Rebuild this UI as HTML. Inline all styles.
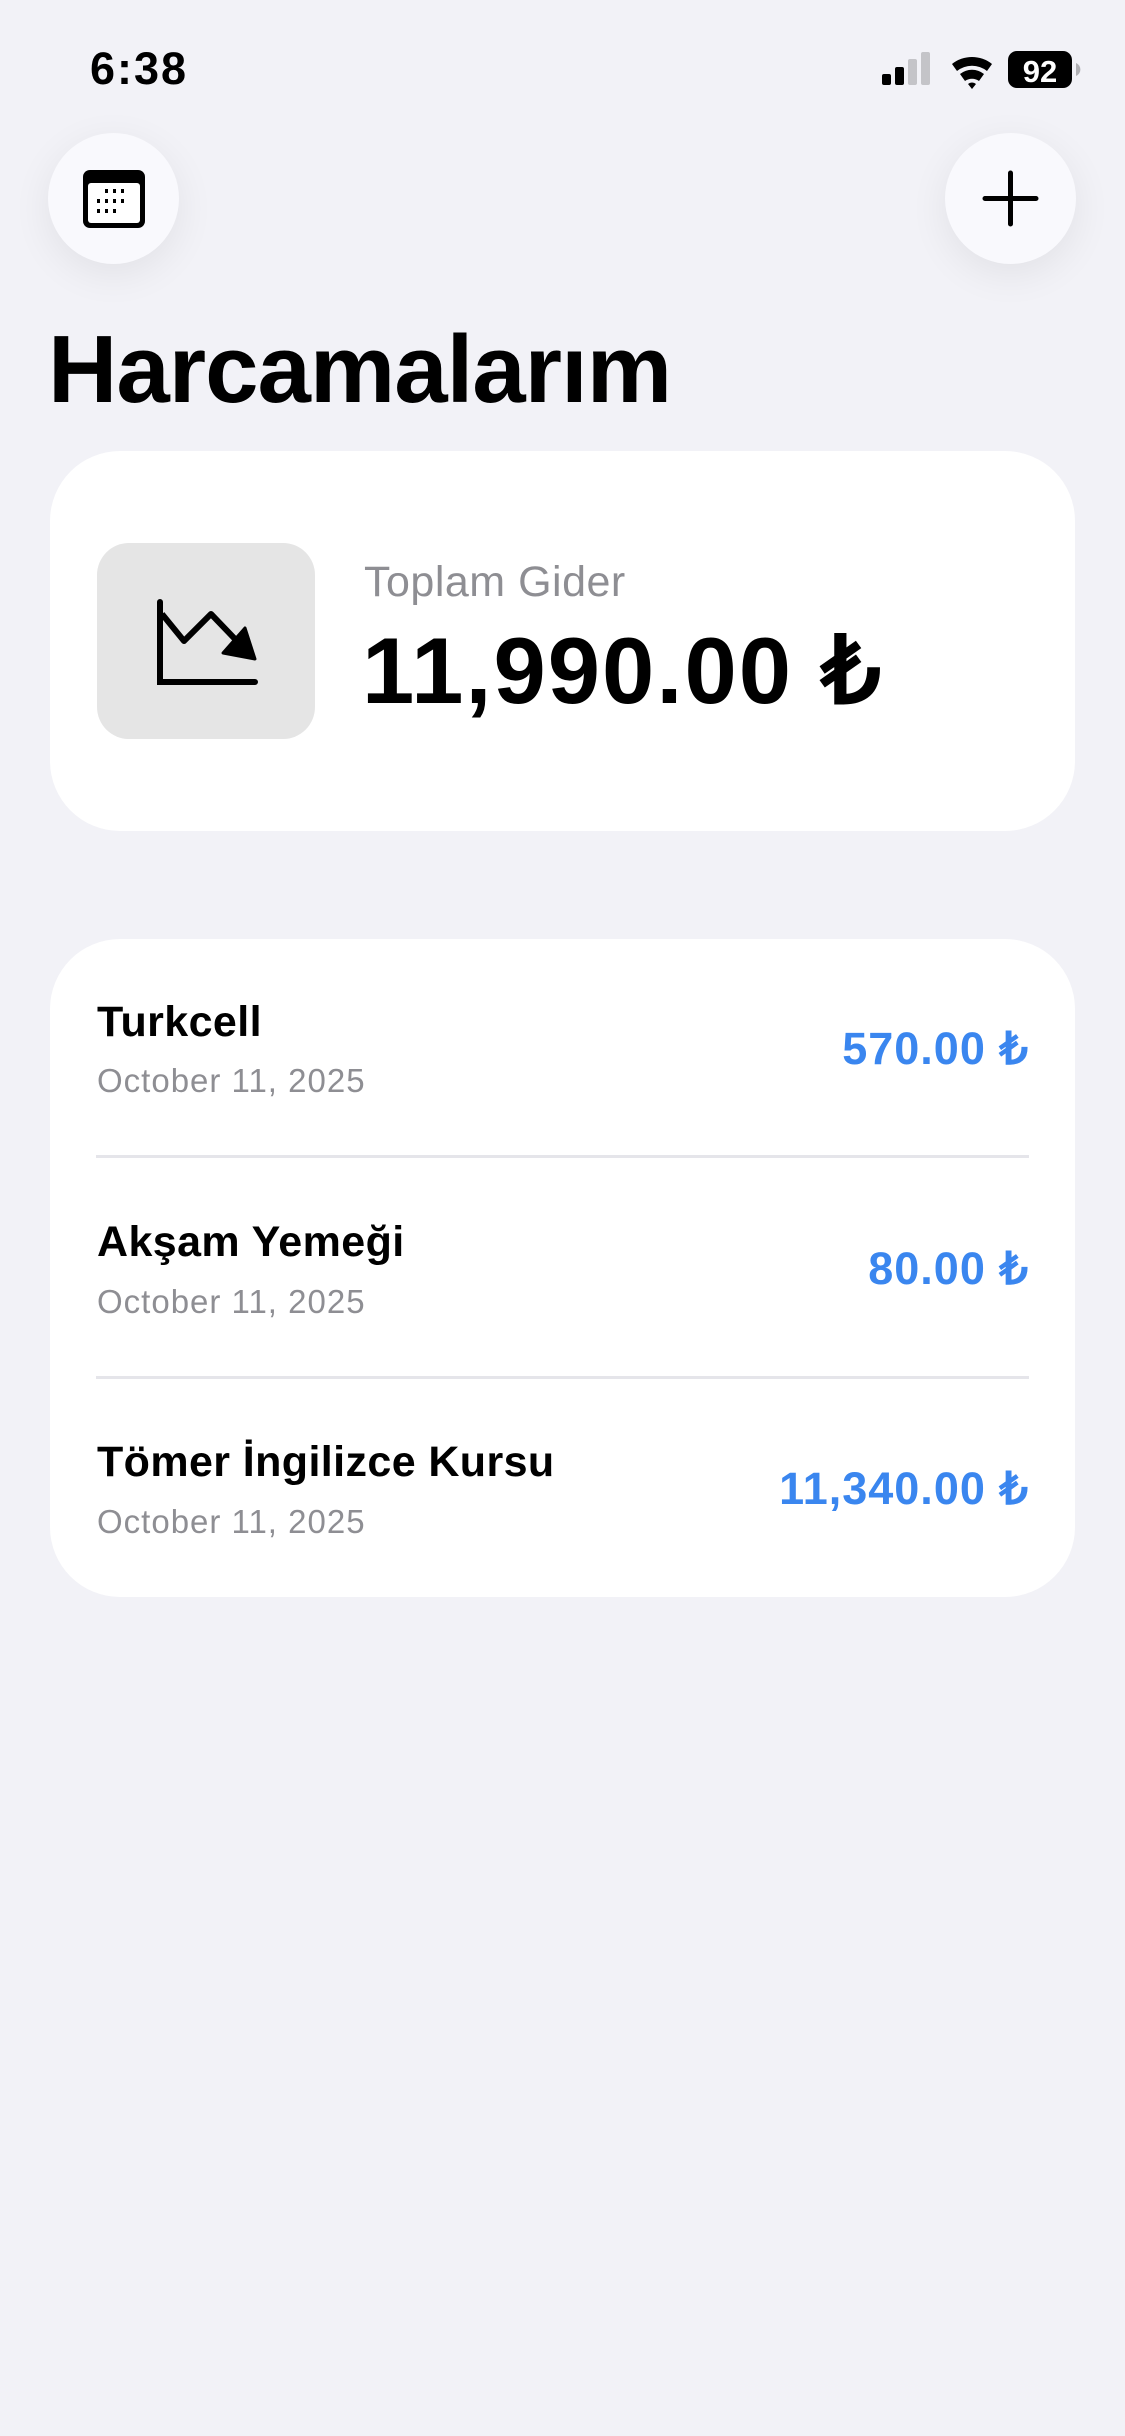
<!DOCTYPE html>
<html><head><meta charset="utf-8"><style>
*{margin:0;padding:0;box-sizing:border-box}
body{width:1125px;height:2436px;background:#f2f2f7;font-family:"Liberation Sans",sans-serif;position:relative;overflow:hidden}
.abs{position:absolute}
.btn{position:absolute;width:131px;height:131px;border-radius:50%;background:#f9f9fd;box-shadow:0 10px 40px rgba(0,0,0,0.07)}
.card{position:absolute;left:50px;width:1025px;background:#fff;border-radius:70px}
.name{position:absolute;left:47px;font-size:43px;font-weight:bold;color:#000;line-height:1;letter-spacing:0.4px}
.date{position:absolute;left:47px;font-size:33px;color:#8e8e93;line-height:1;letter-spacing:1px}
.amt{position:absolute;right:46px;font-size:45px;font-weight:bold;color:#3a86ef;line-height:1;letter-spacing:1px}
.div{position:absolute;left:46px;right:46px;height:3px;background:#e5e5ea}
</style></head><body>
<div class="abs" style="left:90px;top:46px;font-size:45px;font-weight:bold;line-height:1;letter-spacing:2px">6:38</div>
<svg class="abs" style="left:880px;top:50px" width="205" height="40" viewBox="0 0 205 40">
<rect x="2" y="24" width="9" height="11" rx="2" fill="#000"/>
<rect x="15" y="17" width="9" height="18" rx="2" fill="#000"/>
<rect x="28" y="9" width="9" height="26" rx="2" fill="#c4c4c8"/>
<rect x="41" y="2" width="9" height="33" rx="2" fill="#c4c4c8"/>
<path d="M72 14 A32 32 0 0 1 112 14 L107 21 A24 24 0 0 0 77 21 Z" fill="#000"/>
<path d="M80 24 A19 19 0 0 1 104 24 L99 31 A12 12 0 0 0 85 31 Z" fill="#000"/>
<path d="M88 34 L92 39 L96 34 A6 6 0 0 0 88 34Z" fill="#000"/>
<rect x="128" y="1" width="64" height="37" rx="9" fill="#000"/>
<path d="M196 13 A7 7 0 0 1 196 26 Z" fill="#b0b0b4"/>
<text x="160" y="32" font-family="Liberation Sans" font-weight="bold" font-size="31" fill="#fff" text-anchor="middle">92</text>
</svg>
<div class="btn" style="left:48px;top:133px">
<svg class="abs" style="left:33px;top:35px" width="66" height="62" viewBox="0 0 66 62">
<rect x="2" y="2" width="62" height="58" rx="7" fill="#000"/>
<rect x="7" y="15" width="52" height="40" rx="3" fill="#fff"/>
<g fill="#000">
<rect x="24" y="21" width="3" height="4"/><rect x="32" y="21" width="3" height="4"/><rect x="40" y="21" width="3" height="4"/>
<rect x="16" y="31" width="3" height="4"/><rect x="24" y="31" width="3" height="4"/><rect x="32" y="31" width="3" height="4"/><rect x="40" y="31" width="3" height="4"/>
<rect x="16" y="41" width="3" height="4"/><rect x="24" y="41" width="3" height="4"/><rect x="32" y="41" width="3" height="4"/>
</g></svg>
</div>
<div class="btn" style="left:945px;top:133px">
<svg class="abs" style="left:37px;top:37px" width="57" height="57" viewBox="0 0 57 57">
<path d="M28.5 3V54M3 28.5H54" stroke="#000" stroke-width="5" stroke-linecap="round"/></svg>
</div>
<div class="abs" style="left:48px;top:322px;font-size:96px;font-weight:bold;letter-spacing:-1px;line-height:1">Harcamalarım</div>
<div class="card" style="top:451px;height:380px">
<div class="abs" style="left:47px;top:92px;width:218px;height:196px;border-radius:32px;background:#e5e5e5">
<svg class="abs" style="left:0;top:0" width="218" height="196" viewBox="96 542 218 196">
<path d="M159 601V681H254" fill="none" stroke="#000" stroke-width="6" stroke-linecap="round"/>
<path d="M161 613L183 640L210 613L234 638" fill="none" stroke="#000" stroke-width="6" stroke-linejoin="round"/>
<path d="M244 627L254 658L222 652Z" fill="#000" stroke="#000" stroke-width="3" stroke-linejoin="round"/>
</svg></div>
<div class="abs" style="left:314px;top:110px;font-size:43px;color:#8e8e93;line-height:1;letter-spacing:0.5px">Toplam Gider</div>
<div class="abs" style="left:312px;top:173px;font-size:94px;font-weight:bold;line-height:1;letter-spacing:2px">11,990.00 ₺</div>
</div>
<div class="card" style="top:939px;height:658px">
<div class="name" style="top:62px">Turkcell</div>
<div class="date" style="top:125px">October 11, 2025</div>
<div class="amt" style="top:87px">570.00 ₺</div>
<div class="div" style="top:216px"></div>
<div class="name" style="top:282px">Akşam Yemeği</div>
<div class="date" style="top:346px">October 11, 2025</div>
<div class="amt" style="top:307px">80.00 ₺</div>
<div class="div" style="top:437px"></div>
<div class="name" style="top:502px">Tömer İngilizce Kursu</div>
<div class="date" style="top:566px">October 11, 2025</div>
<div class="amt" style="top:527px">11,340.00 ₺</div>
</div>
</body></html>
